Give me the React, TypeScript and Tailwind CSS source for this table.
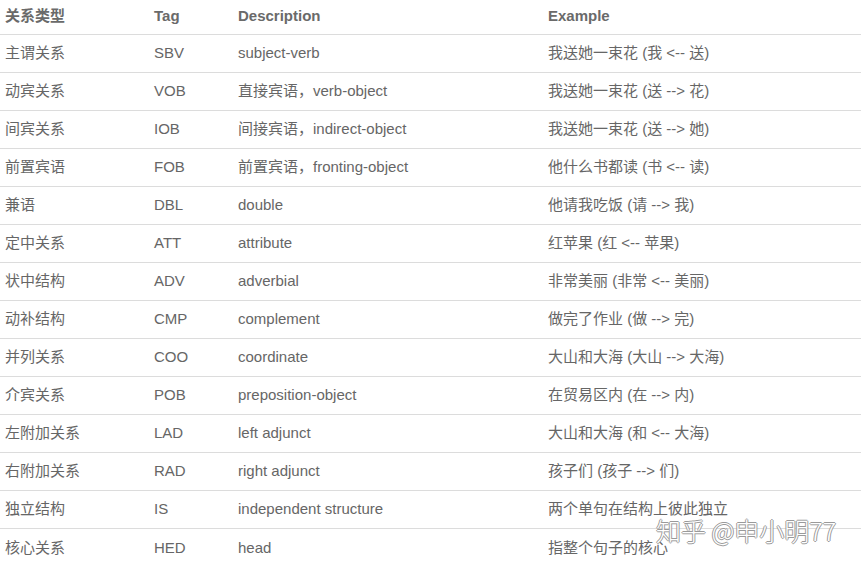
import React from "react";

const rows: [string, string, string, string][] = [
  ["主谓关系", "SBV", "subject-verb", "我送她一束花 (我 <-- 送)"],
  ["动宾关系", "VOB", "直接宾语，verb-object", "我送她一束花 (送 --> 花)"],
  ["间宾关系", "IOB", "间接宾语，indirect-object", "我送她一束花 (送 --> 她)"],
  ["前置宾语", "FOB", "前置宾语，fronting-object", "他什么书都读 (书 <-- 读)"],
  ["兼语", "DBL", "double", "他请我吃饭 (请 --> 我)"],
  ["定中关系", "ATT", "attribute", "红苹果 (红 <-- 苹果)"],
  ["状中结构", "ADV", "adverbial", "非常美丽 (非常 <-- 美丽)"],
  ["动补结构", "CMP", "complement", "做完了作业 (做 --> 完)"],
  ["并列关系", "COO", "coordinate", "大山和大海 (大山 --> 大海)"],
  ["介宾关系", "POB", "preposition-object", "在贸易区内 (在 --> 内)"],
  ["左附加关系", "LAD", "left adjunct", "大山和大海 (和 <-- 大海)"],
  ["右附加关系", "RAD", "right adjunct", "孩子们 (孩子 --> 们)"],
  ["独立结构", "IS", "independent structure", "两个单句在结构上彼此独立"],
  ["核心关系", "HED", "head", "指整个句子的核心"],
];

const font = {
  fontFamily: '"Liberation Sans", Arial, "Noto Sans CJK SC", sans-serif',
};

export default function App() {
  return (
    <div
      className="relative w-[861px] h-[568px] bg-white overflow-hidden text-[15px] text-[#666666]"
      style={font}
    >
      <div className="grid grid-cols-[154px_84px_310px_1fr] h-[35px] items-center pb-[2px] border-b border-[#dcdcdc] font-bold text-[#6a6a6a]">
        <div className="pl-[5px]">关系类型</div>
        <div>Tag</div>
        <div>Description</div>
        <div>Example</div>
      </div>
      {rows.map((r, i) => (
        <div
          key={i}
          className={
            "grid grid-cols-[154px_84px_310px_1fr] h-[38px] items-center " +
            (i < rows.length - 1 ? "border-b border-[#dcdcdc]" : "")
          }
        >
          <div className="pl-[5px]">{r[0]}</div>
          <div>{r[1]}</div>
          <div>{r[2]}</div>
          <div>{r[3]}</div>
        </div>
      ))}
      <div
        className="absolute left-[656px] top-[513px] text-[25px] leading-[34px] text-white whitespace-nowrap"
        style={{
          fontFamily: '"Noto Sans CJK SC", sans-serif',
          fontWeight: 300,
          textShadow:
            "1px 0 0 #9a9a9a, -1px 0 0 #9a9a9a, 0 1px 0 #9a9a9a, 0 -1px 0 #9a9a9a",
        }}
      >
        知乎 @申小明77
      </div>
    </div>
  );
}
